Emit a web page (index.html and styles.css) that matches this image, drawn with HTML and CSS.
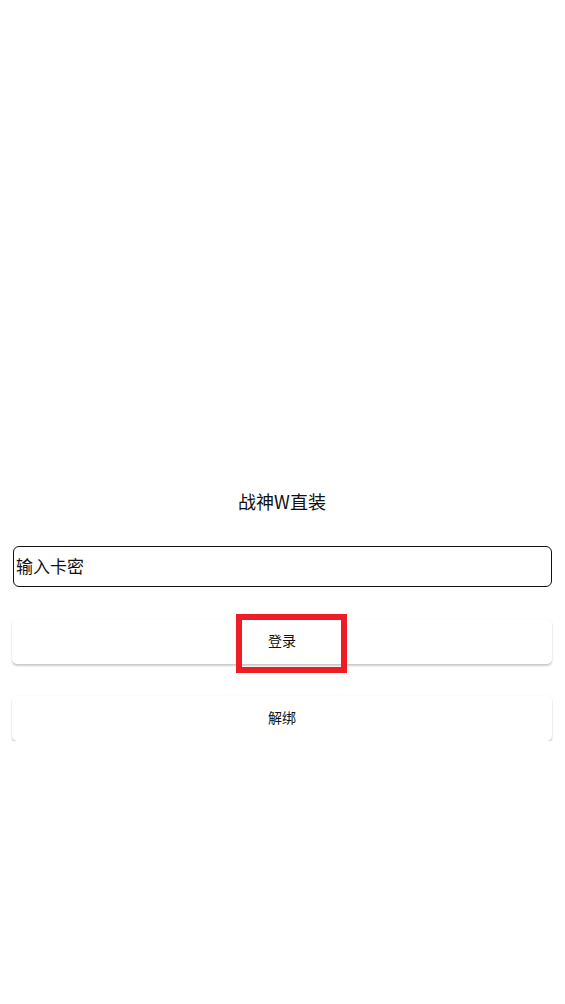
FILE: index.html
```html
<!DOCTYPE html>
<html lang="zh-CN">
<head>
    <meta charset="UTF-8">
    <title>战神W直装</title>
    <link rel="stylesheet" href="styles.css">
</head>
<body>
<div id="login">
    <h1 class="title">战神W直装</h1>
    <input class="card-input" type="text" placeholder="输入卡密">
    <div class="btn btn-login">
        登录
        <!--标记框-->
        <span class="mark"></span>
    </div>
    <div class="btn">解绑</div>
</div>
</body>
</html>
```

FILE: styles.css
```css
*{
    margin:0;
    padding:0;
    box-sizing: border-box;
}
body{
    background: #fff;
    font-family: "Noto Sans CJK SC", "Noto Sans", sans-serif;
    color: #111;
}
#login{
    display: flex;
    flex-direction: column;
    gap: 32px;
    padding: 489px 13px 0 12px;
}
.title{
    font-size: 18px;
    font-weight: normal;
    line-height: 25px;
    text-align: center;
    color: #111;
}
.card-input{
    height: 41px;
    margin-left: 1px;
    border: 1px solid #111;
    border-radius: 6px;
    padding: 0 0 2px 2px;
    font-family: inherit;
    font-size: 17px;
    color: #111;
    outline: none;
}
.card-input::placeholder{
    color: #111;
}
.btn{
    height: 45px;
    padding-bottom: 3px;
    border-radius: 5px;
    background: #fff;
    box-shadow: 0 2px 2px rgba(0,0,0,0.2), 0 0 2px rgba(0,0,0,0.06);
    display: flex;
    align-items: center;
    justify-content: center;
    font-size: 14px;
    color: #111;
}
.btn-login{
    position: relative;
}
.mark{
    position: absolute;
    left: 224px;
    top: -5px;
    width: 111px;
    height: 59px;
    border: 6px solid #ee1c25;
}
```
